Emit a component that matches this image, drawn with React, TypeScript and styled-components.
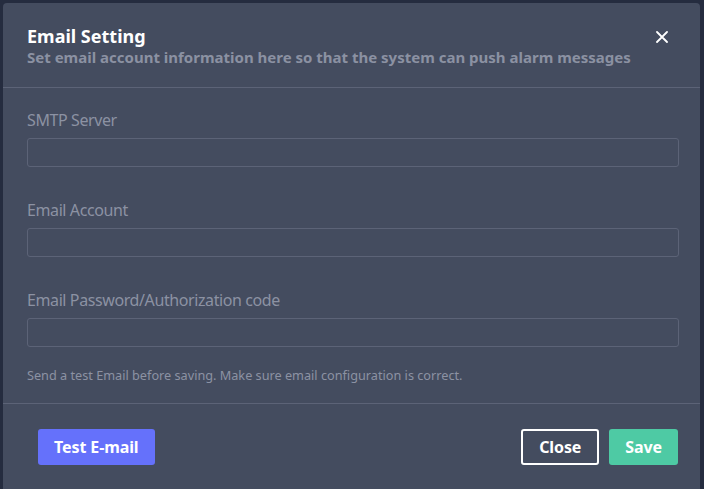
import React from "react";
import styled, { createGlobalStyle } from "styled-components";

const Global = createGlobalStyle`
  html, body { margin: 0; padding: 0; background: #252c3f; }
  body { font-family: "Noto Sans", "Open Sans", sans-serif; overflow: hidden; }
  * { box-sizing: border-box; }
`;

const Backdrop = styled.div`
  height: 489px;
  padding: 3px 4px 0 3px;
  background: #252c3f;
`;

const Modal = styled.div`
  background: #444c5f;
  border-radius: 4px 4px 0 0;
  height: 500px;
  display: flex;
  flex-direction: column;
`;

const Header = styled.div`
  display: flex;
  justify-content: space-between;
  align-items: flex-start;
  padding: 21px 24px 20px 24px;
  border-bottom: 1px solid #5c6377;
`;

const TitleBlock = styled.div`
  display: flex;
  flex-direction: column;
`;

const Title = styled.h2`
  margin: 0;
  font-size: 18px;
  line-height: 24px;
  font-weight: 700;
  color: #ffffff;
`;

const Subtitle = styled.p`
  margin: 0;
  font-size: 15px;
  line-height: 19px;
  font-weight: 700;
  color: #8b91a2;
`;

const CloseIcon = styled.button`
  background: none;
  border: none;
  padding: 0;
  margin: 7px 6px 0 0;
  width: 14px;
  height: 14px;
  display: flex;
  cursor: pointer;
`;

const Body = styled.div`
  display: flex;
  flex-direction: column;
  padding: 21px 21px 20px 24px;
  border-bottom: 1px solid #5c6377;
`;

const Field = styled.div`
  display: flex;
  flex-direction: column;
  gap: 7px;
  margin-bottom: 32px;
  &:last-of-type { margin-bottom: 20px; }
`;

const Label = styled.label`
  font-size: 16px;
  line-height: 22px;
  color: #8c92a3;
  letter-spacing: -0.4px;
`;

const Input = styled.input`
  height: 29px;
  background: transparent;
  border: 1px solid #5c6377;
  border-radius: 3px;
  color: #fff;
  padding: 0 8px;
  outline: none;
  font-family: inherit;
`;

const Hint = styled.p`
  margin: 0;
  font-size: 12.7px;
  line-height: 16px;
  color: #8c92a3;
`;

const Footer = styled.div`
  display: flex;
  align-items: center;
  padding: 25px 22px 24px 35px;
`;

const Spacer = styled.div`
  flex: 1;
`;

const Button = styled.button<{ $variant: "primary" | "outline" | "success" }>`
  height: 36px;
  padding: 0 16px;
  border-radius: 3px;
  font-family: inherit;
  font-size: 16px;
  font-weight: 700;
  color: #fff;
  letter-spacing: -0.1px;
  cursor: pointer;
  border: ${(p) => (p.$variant === "outline" ? "2px solid #ffffff" : "none")};
  background: ${(p) =>
    p.$variant === "primary" ? "#6571fb" : p.$variant === "success" ? "#4ecaa4" : "transparent"};
  margin-left: ${(p) => (p.$variant === "success" ? "10px" : "0")};
`;

export default function App() {
  return (
    <>
      <Global />
      <Backdrop>
        <Modal>
          <Header>
            <TitleBlock>
              <Title>Email Setting</Title>
              <Subtitle>Set email account information here so that the system can push alarm messages</Subtitle>
            </TitleBlock>
            <CloseIcon aria-label="close">
              <svg width="12" height="12" viewBox="0 0 12 12">
                <path d="M1 1 L11 11 M11 1 L1 11" stroke="#fff" strokeWidth="1.8" strokeLinecap="round" />
              </svg>
            </CloseIcon>
          </Header>
          <Body>
            <Field>
              <Label>SMTP Server</Label>
              <Input />
            </Field>
            <Field>
              <Label>Email Account</Label>
              <Input />
            </Field>
            <Field>
              <Label>Email Password/Authorization code</Label>
              <Input type="password" />
            </Field>
            <Hint>Send a test Email before saving. Make sure email configuration is correct.</Hint>
          </Body>
          <Footer>
            <Button $variant="primary">Test E-mail</Button>
            <Spacer />
            <Button $variant="outline">Close</Button>
            <Button $variant="success">Save</Button>
          </Footer>
        </Modal>
      </Backdrop>
    </>
  );
}
